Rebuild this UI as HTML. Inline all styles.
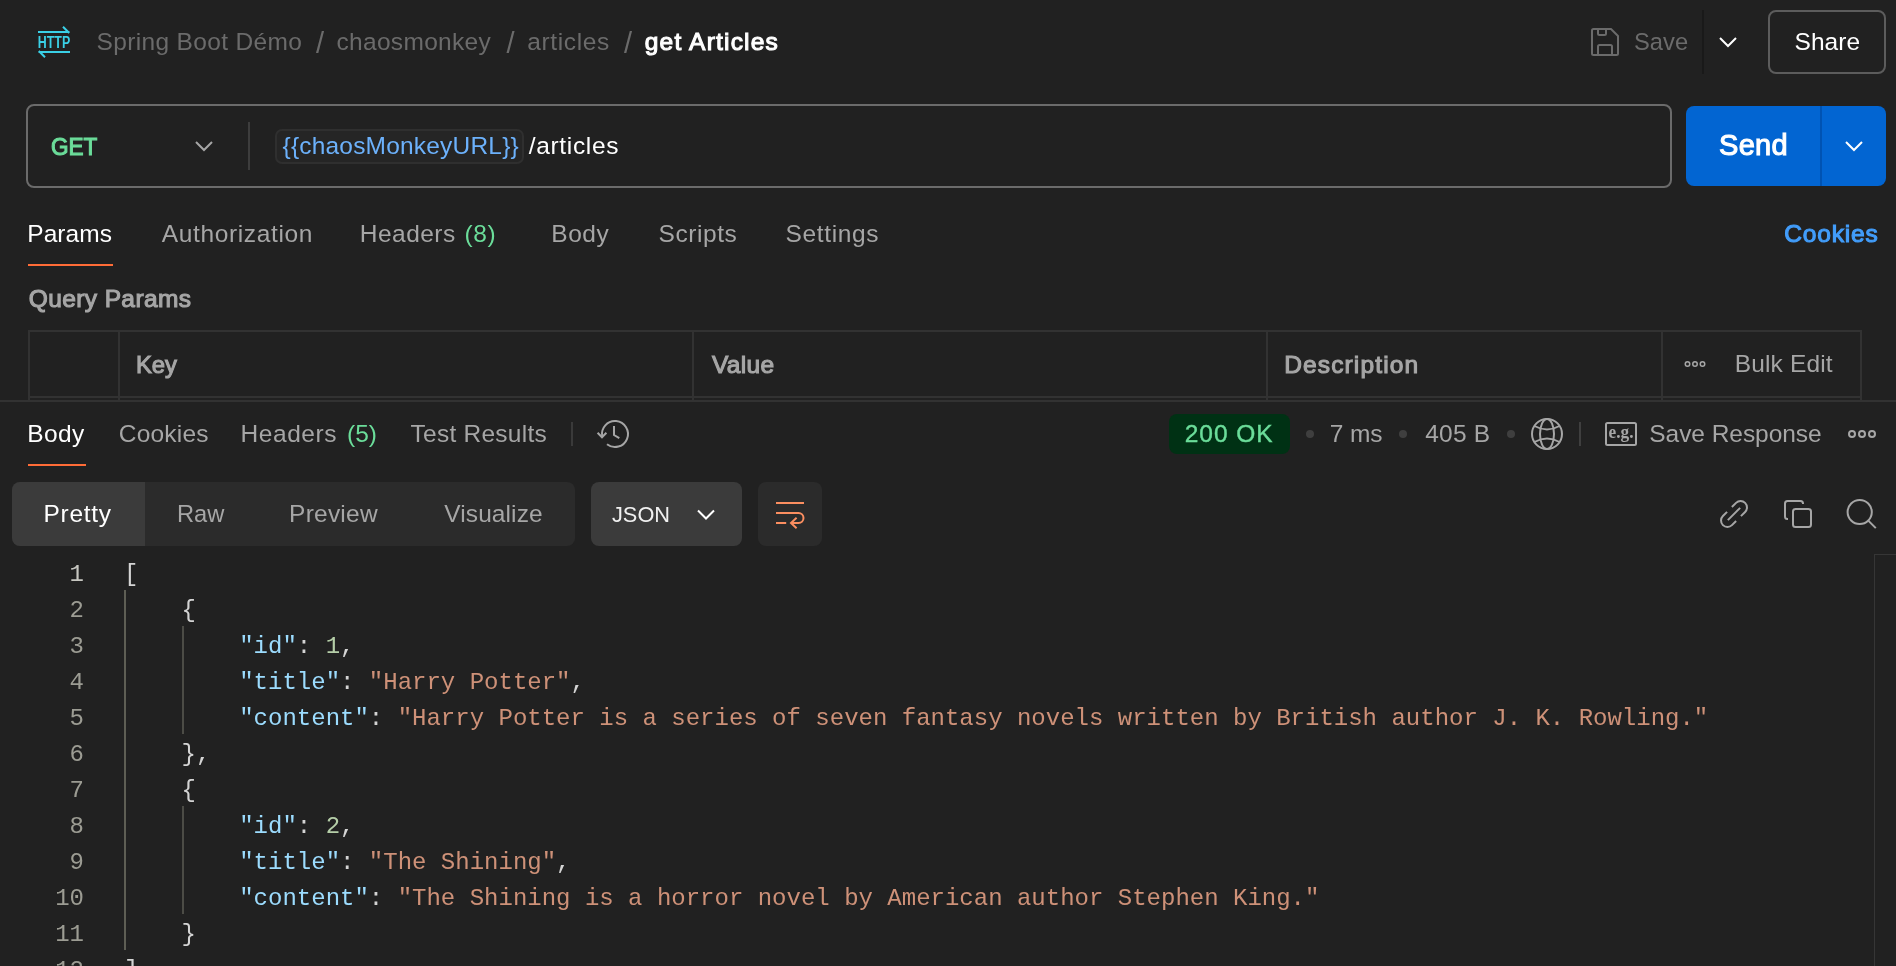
<!DOCTYPE html>
<html lang="en">
<head>
<meta charset="utf-8">
<title>get Articles</title>
<style>
*{box-sizing:border-box;margin:0;padding:0}
html,body{width:1896px;height:966px;overflow:hidden;background:#212121}
body{position:relative;font-family:"Liberation Sans",sans-serif;color:#fff}
#app{position:absolute;left:0;top:0;width:1896px;height:966px;will-change:transform}
.abs,.t,svg.i{position:absolute}
.t{white-space:nowrap;display:block}
svg.i{left:0;top:0;overflow:visible;fill:none}
.urlbox{left:26px;top:104px;width:1646px;height:84px;border:2px solid #6b6b6b;border-radius:8px}
.usep{left:248px;top:122px;width:2px;height:48px;background:#3d3d3d}
.pill{left:275px;top:129px;width:249px;height:35px;border:2px solid #2f2f2f;border-radius:7px;background:#252525}
.sendbtn{left:1686px;top:106px;width:200px;height:80px;border-radius:8px;background:#0265d2}
.sendsep{left:1820px;top:106px;width:2px;height:80px;background:#0053b3}
.sharebtn{left:1768px;top:10px;width:118px;height:64px;border:2px solid #5c5c5c;border-radius:8px}
.hsep{left:1702px;top:10px;width:2px;height:64px;background:#191919}
.ul{height:2px;background:#ff6c37}
.ln{background:#323232}
.seg{left:12px;top:482px;width:563px;height:64px;border-radius:8px;background:#2b2b2b}
.segact{left:12px;top:482px;width:133px;height:64px;border-radius:8px 0 0 8px;background:#3b3b3b}
.jsonbtn{left:591px;top:482px;width:151px;height:64px;border-radius:8px;background:#3b3b3b}
.wrapbtn{left:758px;top:482px;width:64px;height:64px;border-radius:8px;background:#2b2b2b}
.badge{left:1169px;top:414px;width:121px;height:40px;border-radius:8px;background:#003114}
.dot{width:8px;height:8px;border-radius:50%;background:#3f3f3f;top:430px}
.code{left:0;top:555px;width:1874px;height:411px;overflow:hidden;font-family:"Liberation Mono",monospace;font-size:24px}
.row{position:absolute;left:0;width:1874px;height:36px;line-height:36px;white-space:pre}
.num{position:absolute;left:0;top:2px;width:84px;text-align:right;color:#9c9c93}
.src{position:absolute;left:124px;top:2px;color:#d4d4d4}
.k{color:#9cdcfe}.s{color:#ce9178}.n{color:#b5cea8}
.g1{background:#5e5e54;width:2px}.g2{background:#4c4c46;width:2px}
</style>
</head>
<body>
<div id="app">
<!-- header / breadcrumb -->
<header>
<svg class="i" width="1896" height="100" viewBox="0 0 1896 100">
  <g stroke="#3ad0e6" stroke-width="2">
    <path d="M38 32H69.5M63 26.800L69.200 33"/>
    <path d="M70 52H38.500M45 57.200L38.800 51"/>
  </g>
  <text x="37.800" y="48.400" fill="#3ad0e6" stroke="none" font-family="Liberation Sans, sans-serif" font-weight="700" font-size="17.200" textLength="32.400" lengthAdjust="spacingAndGlyphs">HTTP</text>
  <g stroke="#6b6b6b" stroke-width="2" stroke-linejoin="round">
    <path d="M1593.5 29H1611L1618 36V53.5Q1618 55 1616.500 55H1593.500Q1592 55 1592 53.500V30.500Q1592 29 1593.500 29Z"/>
    <path d="M1598 29V33.500Q1598 35 1599.500 35H1604.500Q1606 35 1606 33.500V29"/>
    <path d="M1598 55V46.500Q1598 45 1599.500 45H1610.500Q1612 45 1612 46.500V55"/>
  </g>
  <path d="M1720 38L1728 46L1736 38" stroke="#fff" stroke-width="2"/>
</svg>
<div class="abs hsep"></div>
<div class="abs sharebtn"></div>
<span class="t" id="bc1" style="left:96.50px;top:30.00px;font-size:24.5px;line-height:24.5px;color:#6b6b6b;letter-spacing:0.346px;">Spring Boot Démo</span>
<span class="t" id="bc2" style="left:316.00px;top:29.00px;font-size:29px;line-height:29px;color:#6b6b6b;letter-spacing:0.000px;">/</span>
<span class="t" id="bc3" style="left:336.50px;top:30.00px;font-size:24.5px;line-height:24.5px;color:#6b6b6b;letter-spacing:0.309px;">chaosmonkey</span>
<span class="t" id="bc4" style="left:506.50px;top:29.00px;font-size:29px;line-height:29px;color:#6b6b6b;letter-spacing:0.000px;">/</span>
<span class="t" id="bc5" style="left:527.25px;top:30.00px;font-size:24.5px;line-height:24.5px;color:#6b6b6b;letter-spacing:0.628px;">articles</span>
<span class="t" id="bc6" style="left:624.00px;top:29.00px;font-size:29px;line-height:29px;color:#6b6b6b;letter-spacing:0.000px;">/</span>
<span class="t" id="bc7" style="left:644.75px;top:30.00px;font-size:24.5px;line-height:24.5px;color:#ffffff;letter-spacing:1.206px;-webkit-text-stroke:1.1px currentColor;">get Articles</span>
<span class="t" id="save" style="left:1634.03px;top:30.00px;font-size:24.5px;line-height:24.5px;color:#6b6b6b;transform:scaleX(0.9683);transform-origin:0 0;">Save</span>
<span class="t" id="share" style="left:1794.50px;top:30.00px;font-size:24.5px;line-height:24.5px;color:#ffffff;letter-spacing:0.062px;">Share</span>
</header>
<!-- url bar -->
<section>
<div class="abs urlbox"></div>
<div class="abs usep"></div>
<div class="abs pill"></div>
<div class="abs sendbtn"></div>
<div class="abs sendsep"></div>
<svg class="i" width="1896" height="200" viewBox="0 0 1896 200">
  <path d="M196 142L204 150L212 142" stroke="#a6a6a6" stroke-width="2"/>
  <path d="M1846 142L1854 150L1862 142" stroke="#fff" stroke-width="2"/>
</svg>
<span class="t" id="get" style="left:51.08px;top:135.00px;font-size:24.5px;line-height:24.5px;color:#6bdd9a;transform:scaleX(0.9211);transform-origin:0 0;-webkit-text-stroke:1.1px currentColor;">GET</span>
<span class="t" id="var" style="left:282.50px;top:134.00px;font-size:24.5px;line-height:24.5px;color:#6cb1fb;letter-spacing:0.193px;">{{chaosMonkeyURL}}</span>
<span class="t" id="path" style="left:528.75px;top:134.00px;font-size:24.5px;line-height:24.5px;color:#ffffff;letter-spacing:0.667px;">/articles</span>
<span class="t" id="send" style="left:1719.00px;top:131.00px;font-size:29px;line-height:29px;color:#ffffff;letter-spacing:0.300px;-webkit-text-stroke:1.1px currentColor;">Send</span>
</section>
<!-- request tabs + params table -->
<section>
<div class="abs ul" style="left:28px;top:264px;width:85px"></div>
<div class="abs ln" style="left:28px;top:330px;width:1834px;height:2px"></div>
<div class="abs ln" style="left:28px;top:396px;width:1834px;height:2px"></div>
<div class="abs ln" style="left:28px;top:330px;width:2px;height:70px"></div>
<div class="abs ln" style="left:118px;top:330px;width:2px;height:70px"></div>
<div class="abs ln" style="left:692px;top:330px;width:2px;height:70px"></div>
<div class="abs ln" style="left:1266px;top:330px;width:2px;height:70px"></div>
<div class="abs ln" style="left:1661px;top:330px;width:2px;height:70px"></div>
<div class="abs ln" style="left:1860px;top:330px;width:2px;height:70px"></div>
<div class="abs ln" style="left:0;top:400px;width:1896px;height:2px"></div>
<svg class="i" width="1896" height="400" viewBox="0 0 1896 400">
  <g stroke="#a6a6a6" stroke-width="1.5">
    <circle cx="1687.5" cy="364" r="2.25"/><circle cx="1695" cy="364" r="2.25"/><circle cx="1702.500" cy="364" r="2.25"/>
  </g>
</svg>
<span class="t" id="t1" style="left:27.25px;top:222.00px;font-size:24.5px;line-height:24.5px;color:#ffffff;letter-spacing:0.068px;">Params</span>
<span class="t" id="t2" style="left:161.75px;top:222.00px;font-size:24.5px;line-height:24.5px;color:#a6a6a6;letter-spacing:0.635px;">Authorization</span>
<span class="t" id="t3" style="left:359.75px;top:222.00px;font-size:24.5px;line-height:24.5px;color:#a6a6a6;letter-spacing:0.483px;">Headers</span>
<span class="t" id="t3b" style="left:464.50px;top:222.00px;font-size:24.5px;line-height:24.5px;color:#6bdd9a;letter-spacing:0.608px;">(8)</span>
<span class="t" id="t4" style="left:551.25px;top:222.00px;font-size:24.5px;line-height:24.5px;color:#a6a6a6;letter-spacing:0.552px;">Body</span>
<span class="t" id="t5" style="left:658.50px;top:222.00px;font-size:24.5px;line-height:24.5px;color:#a6a6a6;letter-spacing:0.562px;">Scripts</span>
<span class="t" id="t6" style="left:785.50px;top:222.00px;font-size:24.5px;line-height:24.5px;color:#a6a6a6;letter-spacing:0.639px;">Settings</span>
<span class="t" id="ck" style="left:1784.20px;top:222.00px;font-size:24.5px;line-height:24.5px;color:#429dfa;letter-spacing:0.839px;-webkit-text-stroke:1.1px currentColor;">Cookies</span>
<span class="t" id="qp" style="left:28.75px;top:287.00px;font-size:24.5px;line-height:24.5px;color:#a6a6a6;letter-spacing:0.392px;-webkit-text-stroke:1.1px currentColor;">Query Params</span>
<span class="t" id="h1" style="left:135.81px;top:353.00px;font-size:24.5px;line-height:24.5px;color:#a6a6a6;transform:scaleX(0.9703);transform-origin:0 0;-webkit-text-stroke:1.1px currentColor;">Key</span>
<span class="t" id="h2" style="left:712.00px;top:353.00px;font-size:24.5px;line-height:24.5px;color:#a6a6a6;letter-spacing:0.321px;-webkit-text-stroke:1.1px currentColor;">Value</span>
<span class="t" id="h3" style="left:1284.20px;top:353.00px;font-size:24.5px;line-height:24.5px;color:#a6a6a6;letter-spacing:1.138px;-webkit-text-stroke:1.1px currentColor;">Description</span>
<span class="t" id="h4" style="left:1734.75px;top:352.00px;font-size:24.5px;line-height:24.5px;color:#a6a6a6;letter-spacing:0.140px;">Bulk Edit</span>
</section>
<!-- response header -->
<section>
<div class="abs ul" style="left:28px;top:464px;width:58px"></div>
<div class="abs ln" style="left:571px;top:422px;width:2px;height:24px;background:#3a3a3a"></div>
<div class="abs badge"></div>
<div class="abs dot" style="left:1306px"></div>
<div class="abs dot" style="left:1399px"></div>
<div class="abs dot" style="left:1507px"></div>
<div class="abs ln" style="left:1579px;top:422px;width:2px;height:24px;background:#3f3f3f"></div>
<div class="abs seg"></div>
<div class="abs segact"></div>
<div class="abs jsonbtn"></div>
<div class="abs wrapbtn"></div>
<svg class="i" width="1896" height="560" viewBox="0 0 1896 560">
  <g stroke="#a6a6a6" stroke-width="2">
    <!-- history -->
    <path d="M602.200 436.500A13 13 0 1 1 607 444.300"/>
    <path d="M597.6 432.800L602 437.300L606.400 432.800"/>
    <path d="M614 426V435L619.300 438.200"/>
    <!-- globe -->
    <circle cx="1547" cy="434" r="15"/>
    <ellipse cx="1547" cy="434" rx="7" ry="15"/>
    <path d="M1534.500 426Q1547 433 1559.500 426M1534.500 442Q1547 435 1559.500 442"/>
    <!-- e.g. -->
    <rect x="1606" y="423" width="30" height="22" rx="1.5"/>
    <!-- more -->
    <circle cx="1852" cy="434" r="3"/><circle cx="1862" cy="434" r="3"/><circle cx="1872" cy="434" r="3"/>
    <!-- link -->
    <g transform="rotate(-45 1734 514)">
      <path d="M1737.400 507.600H1743.300A6.400 6.400 0 0 1 1743.300 520.400H1737.400"/>
      <path d="M1730.600 507.600H1724.700A6.400 6.400 0 0 0 1724.700 520.400H1730.600"/>
      <path d="M1725.300 514H1742.700"/>
    </g>
    <!-- copy -->
    <path d="M1788 519H1787.500Q1785 519 1785 516.500V503.500Q1785 501 1787.500 501H1800.500Q1803 501 1803 503.500V504"/>
    <rect x="1793" y="509" width="18" height="18" rx="2.5"/>
    <!-- search -->
    <circle cx="1859.700" cy="512" r="12.100"/>
    <path d="M1868.300 520.600L1875.800 528.100"/>
  </g>
  <text x="1608.600" y="438.100" fill="#a6a6a6" font-family="Liberation Serif, serif" font-weight="700" font-size="19" textLength="25" lengthAdjust="spacingAndGlyphs">e.g.</text>
  <path d="M698 510.500L706 518.500L714 510.500" stroke="#fff" stroke-width="2"/>
  <g stroke="#fb8e60" stroke-width="2">
    <path d="M776 503H804"/>
    <path d="M776 513H798.500A5 5 0 0 1 798.500 523H791"/>
    <path d="M796.600 517.800L791 523L796.600 528.200"/>
    <path d="M776 523H786.200"/>
  </g>
</svg>
<span class="t" id="r1" style="left:27.25px;top:422.00px;font-size:24.5px;line-height:24.5px;color:#ffffff;letter-spacing:0.386px;">Body</span>
<span class="t" id="r2" style="left:118.75px;top:422.00px;font-size:24.5px;line-height:24.5px;color:#a6a6a6;letter-spacing:0.206px;">Cookies</span>
<span class="t" id="r3" style="left:240.50px;top:422.00px;font-size:24.5px;line-height:24.5px;color:#a6a6a6;letter-spacing:0.566px;">Headers</span>
<span class="t" id="r3b" style="left:347.00px;top:422.00px;font-size:24.5px;line-height:24.5px;color:#6bdd9a;letter-spacing:-0.017px;">(5)</span>
<span class="t" id="r4" style="left:410.50px;top:422.00px;font-size:24.5px;line-height:24.5px;color:#a6a6a6;letter-spacing:0.256px;">Test Results</span>
<span class="t" id="st" style="left:1184.80px;top:422.00px;font-size:24.5px;line-height:24.5px;color:#6bdd9a;letter-spacing:0.952px;-webkit-text-stroke:0.4px currentColor;">200 OK</span>
<span class="t" id="ms" style="left:1329.75px;top:422.00px;font-size:24.5px;line-height:24.5px;color:#a6a6a6;letter-spacing:-0.114px;">7 ms</span>
<span class="t" id="sz" style="left:1425.25px;top:422.00px;font-size:24.5px;line-height:24.5px;color:#a6a6a6;letter-spacing:0.204px;">405 B</span>
<span class="t" id="sr" style="left:1649.30px;top:422.00px;font-size:24.5px;line-height:24.5px;color:#a6a6a6;letter-spacing:-0.054px;">Save Response</span>
<span class="t" id="s1" style="left:43.50px;top:502.00px;font-size:24.5px;line-height:24.5px;color:#ffffff;letter-spacing:0.702px;">Pretty</span>
<span class="t" id="s2" style="left:176.67px;top:502.00px;font-size:24.5px;line-height:24.5px;color:#a6a6a6;transform:scaleX(0.9668);transform-origin:0 0;">Raw</span>
<span class="t" id="s3" style="left:289.10px;top:502.00px;font-size:24.5px;line-height:24.5px;color:#a6a6a6;letter-spacing:0.226px;">Preview</span>
<span class="t" id="s4" style="left:444.25px;top:502.00px;font-size:24.5px;line-height:24.5px;color:#a6a6a6;letter-spacing:0.096px;">Visualize</span>
<span class="t" id="s5" style="left:612.00px;top:503.00px;font-size:22.8px;line-height:22.8px;color:#f0f0f0;transform:scaleX(0.9539);transform-origin:0 0;">JSON</span>
</section>
<!-- response body -->
<main>
<div class="abs code">
<div class="row" style="top:0px"><span class="num" style="color:#c6c6c0">1</span><span class="src">[</span></div>
<div class="row" style="top:36px"><span class="num">2</span><span class="src">    {</span></div>
<div class="row" style="top:72px"><span class="num">3</span><span class="src">        <span class="k">"id"</span>: <span class="n">1</span>,</span></div>
<div class="row" style="top:108px"><span class="num">4</span><span class="src">        <span class="k">"title"</span>: <span class="s">"Harry Potter"</span>,</span></div>
<div class="row" style="top:144px"><span class="num">5</span><span class="src">        <span class="k">"content"</span>: <span class="s">"Harry Potter is a series of seven fantasy novels written by British author J. K. Rowling."</span></span></div>
<div class="row" style="top:180px"><span class="num">6</span><span class="src">    },</span></div>
<div class="row" style="top:216px"><span class="num">7</span><span class="src">    {</span></div>
<div class="row" style="top:252px"><span class="num">8</span><span class="src">        <span class="k">"id"</span>: <span class="n">2</span>,</span></div>
<div class="row" style="top:288px"><span class="num">9</span><span class="src">        <span class="k">"title"</span>: <span class="s">"The Shining"</span>,</span></div>
<div class="row" style="top:324px"><span class="num">10</span><span class="src">        <span class="k">"content"</span>: <span class="s">"The Shining is a horror novel by American author Stephen King."</span></span></div>
<div class="row" style="top:360px"><span class="num">11</span><span class="src">    }</span></div>
<div class="row" style="top:396px"><span class="num">12</span><span class="src">]</span></div>
<div class="abs g1" style="left:124px;top:35px;height:360px"></div>
<div class="abs g2" style="left:182px;top:71px;height:108px"></div>
<div class="abs g2" style="left:182px;top:251px;height:108px"></div>
</div>
<div class="abs ln" style="left:1874px;top:554px;width:22px;height:1px;background:#363636"></div>
<div class="abs ln" style="left:1874px;top:554px;width:1px;height:412px;background:#363636"></div>
</main>
</div>
</body>
</html>
